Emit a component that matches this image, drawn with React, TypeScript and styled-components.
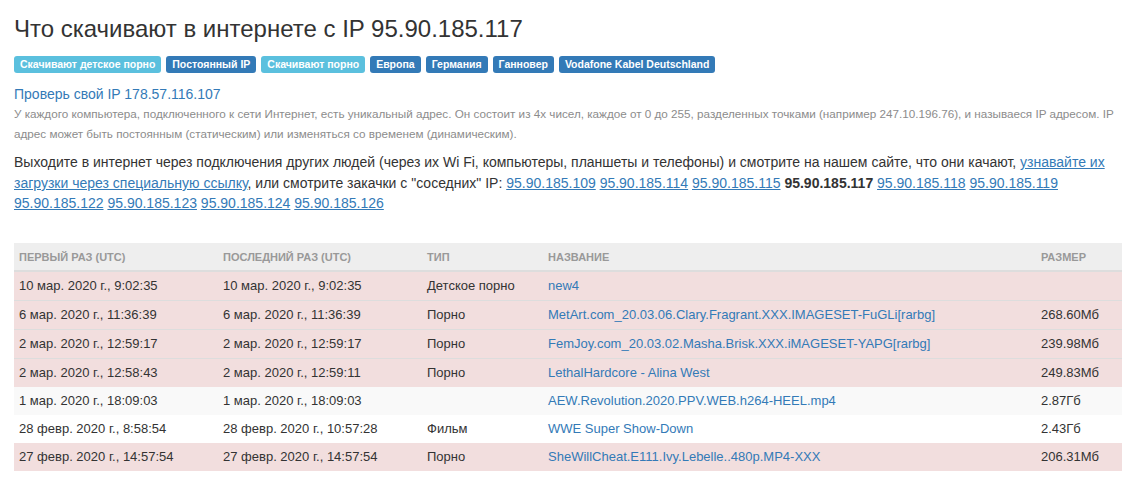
import React from 'react'
import styled, { createGlobalStyle } from 'styled-components'

const GlobalStyle = createGlobalStyle`
	html, body {
		margin: 0;
		padding: 0;
		background: #fff;
	}
	body {
		font-family: 'Liberation Sans', Arial, sans-serif;
		font-size: 14px;
		line-height: 1.42857;
		color: #333;
	}
`

type Tone = 'info' | 'primary'
type RowKind = 'danger' | 'striped' | 'plain'

interface Download {
	first: string
	last: string
	type: string
	name: string
	size: string
	kind: RowKind
}

const labels: { text: string; tone: Tone }[] = [
	{ text: 'Скачивают детское порно', tone: 'info' },
	{ text: 'Постоянный IP', tone: 'primary' },
	{ text: 'Скачивают порно', tone: 'info' },
	{ text: 'Европа', tone: 'primary' },
	{ text: 'Германия', tone: 'primary' },
	{ text: 'Ганновер', tone: 'primary' },
	{ text: 'Vodafone Kabel Deutschland', tone: 'primary' },
]

const neighboursBefore = ['95.90.185.109', '95.90.185.114', '95.90.185.115']
const neighboursAfter = [
	'95.90.185.118',
	'95.90.185.119',
	'95.90.185.122',
	'95.90.185.123',
	'95.90.185.124',
	'95.90.185.126',
]

// column widths of the downloads table; the name column takes the rest
const columns: { title: string; width?: number }[] = [
	{ title: 'Первый раз (UTC)', width: 204 },
	{ title: 'Последний раз (UTC)', width: 204 },
	{ title: 'Тип', width: 121 },
	{ title: 'Название' },
	{ title: 'Размер', width: 86 },
]

const downloads: Download[] = [
	{
		first: '10 мар. 2020 г., 9:02:35',
		last: '10 мар. 2020 г., 9:02:35',
		type: 'Детское порно',
		name: 'new4',
		size: '',
		kind: 'danger',
	},
	{
		first: '6 мар. 2020 г., 11:36:39',
		last: '6 мар. 2020 г., 11:36:39',
		type: 'Порно',
		name: 'MetArt.com_20.03.06.Clary.Fragrant.XXX.IMAGESET-FuGLi[rarbg]',
		size: '268.60Мб',
		kind: 'danger',
	},
	{
		first: '2 мар. 2020 г., 12:59:17',
		last: '2 мар. 2020 г., 12:59:17',
		type: 'Порно',
		name: 'FemJoy.com_20.03.02.Masha.Brisk.XXX.iMAGESET-YAPG[rarbg]',
		size: '239.98Мб',
		kind: 'danger',
	},
	{
		first: '2 мар. 2020 г., 12:58:43',
		last: '2 мар. 2020 г., 12:59:11',
		type: 'Порно',
		name: 'LethalHardcore - Alina West',
		size: '249.83Мб',
		kind: 'danger',
	},
	{
		first: '1 мар. 2020 г., 18:09:03',
		last: '1 мар. 2020 г., 18:09:03',
		type: '',
		name: 'AEW.Revolution.2020.PPV.WEB.h264-HEEL.mp4',
		size: '2.87Гб',
		kind: 'striped',
	},
	{
		first: '28 февр. 2020 г., 8:58:54',
		last: '28 февр. 2020 г., 10:57:28',
		type: 'Фильм',
		name: 'WWE Super Show-Down',
		size: '2.43Гб',
		kind: 'plain',
	},
	{
		first: '27 февр. 2020 г., 14:57:54',
		last: '27 февр. 2020 г., 14:57:54',
		type: 'Порно',
		name: 'SheWillCheat.E111.Ivy.Lebelle..480p.MP4-XXX',
		size: '206.31Мб',
		kind: 'danger',
	},
]

const App = () => {
	return (
		<>
			<GlobalStyle />
			<Page>
				<Title>Что скачивают в интернете с IP 95.90.185.117</Title>
				<Labels>
					{labels.map((l) => (
						<Label key={l.text} tone={l.tone}>
							{l.text}
						</Label>
					))}
				</Labels>
				<CheckLink href="#">Проверь свой IP 178.57.116.107</CheckLink>
				<Muted>
					У каждого компьютера, подключенного к сети Интернет, есть уникальный
					адрес. Он состоит из 4х чисел, каждое от 0 до 255, разделенных точками
					(например 247.10.196.76), и называеся IP адресом. IP адрес может быть
					постоянным (статическим) или изменяться со временем (динамическим).
				</Muted>
				<Lead>
					Выходите в интернет через подключения других людей (через их Wi Fi,
					компьютеры, планшеты и телефоны) и смотрите на нашем сайте, что они
					качают, <TextLink href="#">узнавайте их загрузки через специальную ссылку</TextLink>,
					или смотрите закачки с "соседних" IP:{' '}
					{neighboursBefore.map((ip) => (
						<React.Fragment key={ip}>
							<TextLink href="#">{ip}</TextLink>{' '}
						</React.Fragment>
					))}
					<b>95.90.185.117</b>{' '}
					{neighboursAfter.map((ip, i) => (
						<React.Fragment key={ip}>
							<TextLink href="#">{ip}</TextLink>
							{i < neighboursAfter.length - 1 ? ' ' : ''}
						</React.Fragment>
					))}
				</Lead>
				<Table>
					<colgroup>
						{columns.map((c) => (
							<Col key={c.title} $width={c.width} />
						))}
					</colgroup>
					<thead>
						<tr>
							{columns.map((c) => (
								<Th key={c.title}>{c.title}</Th>
							))}
						</tr>
					</thead>
					<tbody>
						{downloads.map((d) => (
							<Row key={d.name} kind={d.kind}>
								<Td>{d.first}</Td>
								<Td>{d.last}</Td>
								<Td>{d.type}</Td>
								<Td>
									<NameLink href="#">{d.name}</NameLink>
								</Td>
								<Td>{d.size}</Td>
							</Row>
						))}
					</tbody>
				</Table>
			</Page>
		</>
	)
}

const Page = styled.div`
	padding: 0 23px 20px 14px;
`

const Title = styled.h3`
	margin: 16px 0 14px;
	font-size: 24px;
	font-weight: 400;
	line-height: 1.1;
	color: #333;
`

const Labels = styled.div`
	display: flex;
	flex-wrap: wrap;
	gap: 5px;
	margin-bottom: 11px;
`

const Label = styled.span<{ tone: Tone }>`
	display: inline-block;
	padding: 3px 6px 3px;
	font-size: 10.5px;
	font-weight: 700;
	line-height: 11px;
	color: #fff;
	white-space: nowrap;
	border-radius: 3px;
	background-color: ${(p) => (p.tone === 'info' ? '#5bc0de' : '#337ab7')};
`

const CheckLink = styled.a`
	display: block;
	font-size: 14px;
	line-height: 20px;
	color: #337ab7;
	text-decoration: none;
`

const Muted = styled.p`
	margin: 0 0 8px;
	font-size: 11.7px;
	line-height: 20px;
	color: #8c8c8c;
`

const Lead = styled.p`
	margin: 0 0 29px;
	font-size: 14px;
	line-height: 20.5px;
	color: #333;

	b {
		font-weight: 700;
		color: #333;
	}
`

const TextLink = styled.a`
	color: #337ab7;
	text-decoration: underline;
`

const Table = styled.table`
	width: 100%;
	table-layout: fixed;
	border-collapse: collapse;
	border-spacing: 0;
`

const Col = styled.col<{ $width?: number }>`
	width: ${(p) => (p.$width ? `${p.$width}px` : 'auto')};
`

const Th = styled.th`
	padding: 6px 5px 5px;
	text-align: left;
	font-size: 11px;
	font-weight: 700;
	line-height: 16px;
	text-transform: uppercase;
	color: #999;
	background: #eee;
	border-bottom: 2px solid #ddd;
`

const rowBg: Record<RowKind, string> = {
	danger: '#f2dede',
	striped: '#f9f9f9',
	plain: '#fff',
}

const Row = styled.tr<{ kind: RowKind }>`
	background: ${(p) => rowBg[p.kind]};

	& + & td {
		border-top: 1px solid #ddd;
	}
`

const Td = styled.td`
	padding: 4px 5px;
	font-size: 13px;
	line-height: 20px;
	color: #333;
	vertical-align: top;
	white-space: nowrap;
`

const NameLink = styled.a`
	color: #337ab7;
	text-decoration: none;
`

export default App
